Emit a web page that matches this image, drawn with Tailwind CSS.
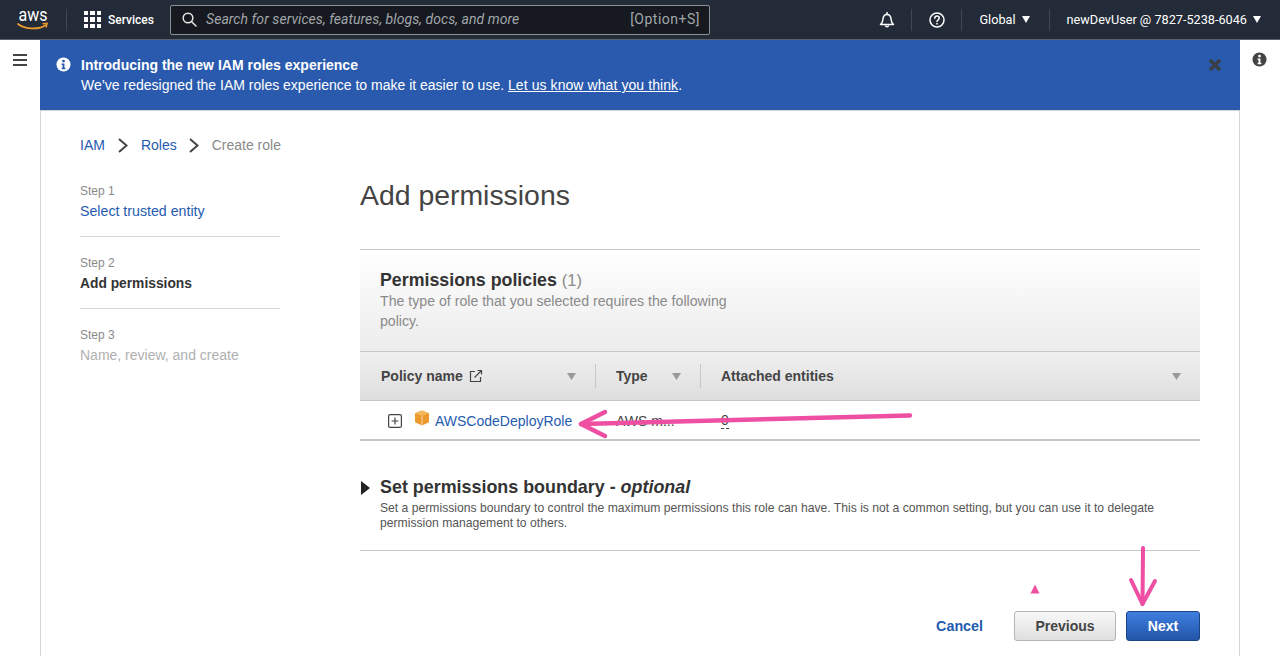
<!DOCTYPE html>
<html lang="en">
<head>
<meta charset="utf-8">
<title>Add permissions</title>
<script src="https://cdn.jsdelivr.net/npm/@tailwindcss/browser@4"></script>
</head>
<body class="relative h-[656px] w-[1280px] overflow-hidden bg-white font-['Liberation_Sans',Arial,sans-serif] text-[14px] text-[#333]">
<header class="flex h-10 items-center border-b border-b-[#5a626c] bg-[#232b38] font-['Roboto',sans-serif] text-[12px] text-white">
  <div class="flex h-10 w-[66px] shrink-0 items-center justify-center">
    <svg class="overflow-visible" width="34" height="24" viewBox="0 0 34 24" fill="none">
      <text x="2.500" y="13" textLength="29" lengthAdjust="spacingAndGlyphs" font-family="Roboto,sans-serif" font-size="18" fill="#fff">aws</text>
      <path d="M2 16C9 21.500 23 22 30 17" stroke="#ec9a2e" stroke-width="1.700" stroke-linecap="round"/>
      <path d="M27 15.700l4.200-.4-1 3.800" stroke="#ec9a2e" stroke-width="1.400" stroke-linecap="round"/>
    </svg>
  </div>
  <div class="h-[22px] w-px bg-[#414750]"></div>
  <div class="ml-[17px] grid h-[17px] w-[17px] shrink-0 grid-cols-3 gap-[2px]">
    <span class="bg-white"></span><span class="bg-white"></span><span class="bg-white"></span>
    <span class="bg-white"></span><span class="bg-white"></span><span class="bg-white"></span>
    <span class="bg-white"></span><span class="bg-white"></span><span class="bg-white"></span>
  </div>
  <span class="ml-[7px] w-[62px] text-[12px] font-medium">Services</span>
  <div class="flex h-[30px] w-[540px] items-center rounded-[2px] border border-[#8b9096] bg-[#16191f] pr-[9px] pl-[11px]">
    <svg width="15" height="15" viewBox="0 0 15 15" fill="none" stroke="#e8e8e8" stroke-width="1.500"><circle cx="6" cy="6" r="4.800"/><path d="M9.500 9.500l4.500 4.500" stroke-linecap="round"/></svg>
    <span class="ml-[9px] text-[14px] tracking-[0.06px] text-[#a2a6ab] italic">Search for services, features, blogs, docs, and more</span>
    <span class="ml-auto text-[14px] tracking-[0.5px] text-[#a2a6ab]">[Option+S]</span>
  </div>
  <div class="ml-auto flex items-center text-[12.700px]">
    <svg width="16" height="17" viewBox="0 0 16 17" fill="none" stroke="#fff" stroke-width="1.500"><path d="M1.500 13.500c1.500-1.200 2.200-2.400 2.400-5 .2-2.600 1.700-5 4.100-5s3.900 2.400 4.100 5c.2 2.600.9 3.800 2.400 5z" stroke-linejoin="round"/><path d="M8 1v2"/><path d="M6.300 14.500a1.800 1.800 0 0 0 3.400 0"/></svg>
    <div class="mr-[17px] ml-[16px] h-[22px] w-px bg-[#414750]"></div>
    <svg width="16" height="16" viewBox="0 0 16 16" fill="none" stroke="#fff" stroke-width="1.500"><circle cx="8" cy="8" r="7"/><path d="M5.800 6.200C5.800 4.900 6.800 4 8 4s2.200.9 2.200 2.100c0 1.700-2.200 1.700-2.200 3.500" stroke-linecap="round"/><path d="M8 11.100v1.300"/></svg>
    <div class="mr-[17px] ml-[16px] h-[22px] w-px bg-[#414750]"></div>
    <span>Global</span>
    <svg class="ml-[6px]" width="8" height="7" viewBox="0 0 8 7"><path d="M0 0h8L4 7z" fill="#fff"/></svg>
    <div class="mr-[17px] ml-[19px] h-[22px] w-px bg-[#414750]"></div>
    <span>newDevUser @ 7827-5238-6046</span>
    <svg class="mr-[19px] ml-[6px]" width="8" height="7" viewBox="0 0 8 7"><path d="M0 0h8L4 7z" fill="#fff"/></svg>
  </div>
</header>

<div class="flex h-[616px]">
  <aside class="w-10 shrink-0 pt-[14px] pl-[13px]">
    <div class="flex w-[14px] flex-col gap-[3px]">
      <span class="h-[2px] bg-[#444]"></span><span class="h-[2px] bg-[#444]"></span><span class="h-[2px] bg-[#444]"></span>
    </div>
  </aside>

  <div class="w-[1200px] shrink-0">
    <div class="flex h-[71px] border-b border-b-[#d5d5d5] bg-[#2a5aad] pt-[15px] text-white">
      <svg class="mt-[2px] ml-[16px] shrink-0" width="15" height="15" viewBox="0 0 16 16"><circle cx="8" cy="8" r="7.500" fill="#fff"/><circle cx="8" cy="4.300" r="1.500" fill="#2a5aad"/><path d="M6 7h3v4.500h1V13H6v-1.500h1V8.500H6z" fill="#2a5aad"/></svg>
      <div class="ml-[10px] leading-[20px]">
        <div class="font-bold">Introducing the new IAM roles experience</div>
        <div>We’ve redesigned the IAM roles experience to make it easier to use. <span class="tracking-[0.08px] underline">Let us know what you think</span>.</div>
      </div>
      <svg class="mt-[3px] mr-[18px] ml-auto shrink-0" width="14" height="14" viewBox="0 0 14 14"><path d="M2 2l10 10M12 2L2 12" stroke="#3a3f46" stroke-width="3.500"/></svg>
    </div>

    <main class="h-[545px] border-x border-x-[#d5d5d5] pt-[25px] pr-[39px] pl-[39px]">
      <nav class="flex h-[18px] items-center">
        <a class="text-[#1f5bb0]">IAM</a>
        <svg class="mr-[13px] ml-[13px]" width="10" height="15" viewBox="0 0 10 15" fill="none" stroke="#444" stroke-width="2"><path d="M1 1l7.500 6.500L1 14"/></svg>
        <a class="text-[#1f5bb0]">Roles</a>
        <svg class="mr-[13px] ml-[12px]" width="10" height="15" viewBox="0 0 10 15" fill="none" stroke="#444" stroke-width="2"><path d="M1 1l7.500 6.500L1 14"/></svg>
        <span class="text-[#8a8a8a]">Create role</span>
      </nav>

      <div class="mt-[19px] flex">
        <ol class="w-[200px] shrink-0 pt-[10px]">
          <li class="h-[54px] border-b border-b-[#d5d5d5]">
            <div class="text-[12px] leading-[16px] text-[#8a8a8a]">Step 1</div>
            <div class="mt-[3px] text-[14.200px] leading-[18px] text-[#1f5bb0]">Select trusted entity</div>
          </li>
          <li class="h-[72px] border-b border-b-[#d5d5d5] pt-[18px]">
            <div class="text-[12px] leading-[16px] text-[#8a8a8a]">Step 2</div>
            <div class="mt-[4px] text-[13.800px] leading-[18px] font-bold text-[#333]">Add permissions</div>
          </li>
          <li class="pt-[18px]">
            <div class="text-[12px] leading-[16px] text-[#8a8a8a]">Step 3</div>
            <div class="mt-[3px] leading-[18px] text-[#b0b0b0]">Name, review, and create</div>
          </li>
        </ol>

        <section class="ml-[80px] w-[840px]">
          <h1 class="pt-[4px] text-[28.400px] leading-[36px] text-[#444]">Add permissions</h1>
          <div class="mt-[36px] border-t border-t-[#c7c7c7]">
            <div class="h-[102px] border-b border-b-[#c7c7c7] bg-gradient-to-b from-[#fff] to-[#ececec] pt-[20px] pl-[20px]">
              <div class="text-[17.800px] leading-[20px] font-bold text-[#333]">Permissions policies <span class="text-[16.500px] font-normal text-[#8a8a8a]">(1)</span></div>
              <p class="mt-[1px] w-[370px] text-[14.150px] leading-[20px] text-[#8a8a8a]">The type of role that you selected requires the following policy.</p>
            </div>
            <div class="flex h-[49px] items-center border-b border-b-[#c7c7c7] bg-gradient-to-b from-[#f0f0f0] to-[#dedede] font-bold text-[#444]">
              <div class="flex h-[24px] w-[236px] items-center border-r border-r-[#c7c7c7] pr-[19px] pl-[21px]">
                <span>Policy name</span>
                <svg class="ml-[6px]" width="14" height="14" viewBox="0 0 14 14" fill="none" stroke="#444" stroke-width="1.200"><path d="M6 2.500H1.500v10h10V8"/><path d="M5.500 8.500L12.500 1.500M8.500 1.500h4v4"/></svg>
                <svg class="ml-auto" width="9" height="7" viewBox="0 0 9 7"><path d="M0 0h9L4.500 7z" fill="#999"/></svg>
              </div>
              <div class="flex h-[24px] w-[105px] items-center border-r border-r-[#c7c7c7] pr-[19px] pl-[20px]">
                <span>Type</span>
                <svg class="ml-auto" width="9" height="7" viewBox="0 0 9 7"><path d="M0 0h9L4.500 7z" fill="#999"/></svg>
              </div>
              <div class="flex h-[24px] flex-1 items-center pr-[19px] pl-[20px]">
                <span>Attached entities</span>
                <svg class="ml-auto" width="9" height="7" viewBox="0 0 9 7"><path d="M0 0h9L4.500 7z" fill="#999"/></svg>
              </div>
            </div>
            <div class="flex h-[40px] items-center border-b-2 border-b-[#c7c7c7] pt-[2px] text-[#444]">
              <svg class="ml-[28px]" width="14" height="14" viewBox="0 0 14 14" fill="none" stroke="#444" stroke-width="1.200"><rect x=".6" y=".6" width="12.800" height="12.800" rx="1.500"/><path d="M3.500 7h7M7 3.500v7"/></svg>
              <svg class="mt-[-6px] ml-[12px]" width="16" height="16" viewBox="0 0 16 16"><path d="M8 .5l7 2.800v9L8 15.500 1 12.300v-9z" fill="#ec9a2e"/><path d="M1 3.300L8 6l7-2.700-7-2.800z" fill="#f6b65c"/><path d="M8 6v9.500" stroke="#fff" stroke-width=".6"/></svg>
              <a class="ml-[5px] w-[181px] text-[#1f5bb0]">AWSCodeDeployRole</a>
              <span class="w-[105px]">AWS m...</span>
              <span class="border-b border-dashed border-b-[#444] leading-[15px]">0</span>
            </div>
          </div>

          <div class="mt-[35px] flex h-[75px] border-b border-b-[#c7c7c7]">
            <svg class="mt-[5px] ml-[1px]" width="9" height="14" viewBox="0 0 9 14"><path d="M0 0l9 7-9 7z" fill="#222"/></svg>
            <div class="ml-[10px]">
              <h2 class="text-[17.900px] leading-[22px] font-bold text-[#333]">Set permissions boundary - <em class="font-bold">optional</em></h2>
              <p class="mt-[3px] w-[800px] text-[12.160px] leading-[15px] text-[#555]">Set a permissions boundary to control the maximum permissions this role can have. This is not a common setting, but you can use it to delegate permission management to others.</p>
            </div>
          </div>

          <div class="mt-[60px] flex items-center justify-end font-bold">
            <a class="mt-[1px] mr-[31px] text-[14.300px] text-[#1f5bb0]">Cancel</a>
            <button class="mr-[10px] h-[30px] w-[102px] rounded-[3px] border border-[#b5b5b5] bg-gradient-to-b from-[#f8f8f8] to-[#dfdfdf] text-[#444]">Previous</button>
            <button class="h-[30px] w-[74px] rounded-[3px] border border-[#1c4587] bg-gradient-to-b from-[#3f7fe0] to-[#2255a8] text-white">Next</button>
          </div>
        </section>
      </div>
    </main>
  </div>

  <aside class="w-10 shrink-0 pt-[12px] pl-[12px]">
    <svg width="15" height="15" viewBox="0 0 16 16"><circle cx="8" cy="8" r="7.500" fill="#444"/><circle cx="8" cy="4.300" r="1.500" fill="#fff"/><path d="M6 7h3v4.500h1V13H6v-1.500h1V8.500H6z" fill="#fff"/></svg>
  </aside>
</div>

<svg class="pointer-events-none absolute top-0 left-0" width="1280" height="656" viewBox="0 0 1280 656" fill="none" stroke="#ee4fa3" stroke-linecap="round" stroke-linejoin="round">
  <path d="M910 415.500L581 424" stroke-width="4.500"/>
  <path d="M605 412L581 424L605 436" stroke-width="4.500"/>
  <path d="M1143 548L1142.500 604" stroke-width="4"/>
  <path d="M1131 580L1142.500 604L1155 581" stroke-width="4"/>
  <path d="M1030.500 593.500L1035 584.500L1039.500 593.500z" fill="#ee4fa3" stroke="none"/>
</svg>
</body>
</html>
